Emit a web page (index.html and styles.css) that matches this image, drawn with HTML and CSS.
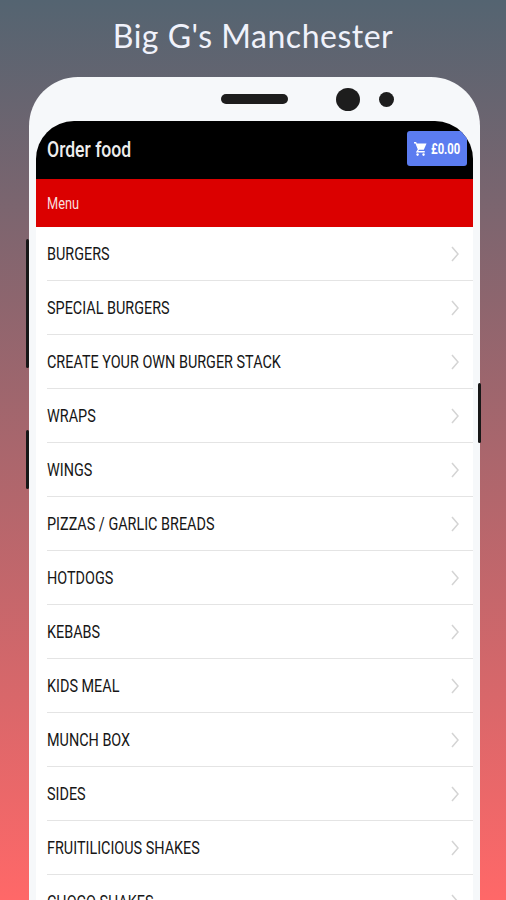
FILE: index.html
```html
<!DOCTYPE html>
<html lang="en">
<head>
<meta charset="utf-8">
<title>Big G's Manchester</title>
<link rel="stylesheet" href="styles.css">
</head>
<body>
<h1><span>Big G's Manchester</span></h1>

<div class="phone">
    <span class="side-button volume"></span>
    <span class="side-button assistant"></span>
    <span class="side-button power"></span>

    <div class="sensors">
        <span class="speaker"></span>
        <span class="camera"></span>
        <span class="sensor"></span>
    </div>

    <div class="screen">
        <header>
            <h2>Order food</h2>
            <button class="cart">
                <svg width="13" height="14" viewBox="1 2 21 20" preserveAspectRatio="none">
                    <path fill="#fff" d="M5 4h17l-4.500 9H8.500z"/>
                    <path fill="none" stroke="#fff" stroke-width="2" d="M1 3h3l4.500 9.500L6 16h13"/>
                    <circle fill="#fff" cx="7" cy="20" r="2"/>
                    <circle fill="#fff" cx="17" cy="20" r="2"/>
                </svg>
                <span>£0.00</span>
            </button>
        </header>
        <div class="section"><span>Menu</span></div>
        <ul class="menu">
            <li><span>BURGERS</span><svg class="arrow" viewBox="0 0 8 16"><path d="M1 1l6 7-6 7"/></svg></li>
            <li><span>SPECIAL BURGERS</span><svg class="arrow" viewBox="0 0 8 16"><path d="M1 1l6 7-6 7"/></svg></li>
            <li><span>CREATE YOUR OWN BURGER STACK</span><svg class="arrow" viewBox="0 0 8 16"><path d="M1 1l6 7-6 7"/></svg></li>
            <li><span>WRAPS</span><svg class="arrow" viewBox="0 0 8 16"><path d="M1 1l6 7-6 7"/></svg></li>
            <li><span>WINGS</span><svg class="arrow" viewBox="0 0 8 16"><path d="M1 1l6 7-6 7"/></svg></li>
            <li><span>PIZZAS / GARLIC BREADS</span><svg class="arrow" viewBox="0 0 8 16"><path d="M1 1l6 7-6 7"/></svg></li>
            <li><span>HOTDOGS</span><svg class="arrow" viewBox="0 0 8 16"><path d="M1 1l6 7-6 7"/></svg></li>
            <li><span>KEBABS</span><svg class="arrow" viewBox="0 0 8 16"><path d="M1 1l6 7-6 7"/></svg></li>
            <li><span>KIDS MEAL</span><svg class="arrow" viewBox="0 0 8 16"><path d="M1 1l6 7-6 7"/></svg></li>
            <li><span>MUNCH BOX</span><svg class="arrow" viewBox="0 0 8 16"><path d="M1 1l6 7-6 7"/></svg></li>
            <li><span>SIDES</span><svg class="arrow" viewBox="0 0 8 16"><path d="M1 1l6 7-6 7"/></svg></li>
            <li><span>FRUITILICIOUS SHAKES</span><svg class="arrow" viewBox="0 0 8 16"><path d="M1 1l6 7-6 7"/></svg></li>
            <li><span>CHOCO SHAKES</span><svg class="arrow" viewBox="0 0 8 16"><path d="M1 1l6 7-6 7"/></svg></li>
        </ul>
    </div>
</div>
</body>
</html>
```
FILE: styles.css
```css
* {
    box-sizing: border-box;
}

body {
    margin: 0;
    height: 900px;
    overflow: hidden;
    background: linear-gradient(#546471, #ff6868);
    font-family: Roboto, "Liberation Sans", sans-serif;
}

h1 {
    margin: 0;
    height: 77px;
    padding-top: 16px;
    text-align: center;
    color: #f0f2fb;
    font: 400 32px/40px Lato, sans-serif;
    letter-spacing: .5px;
}

.phone {
    position: relative;
    width: 451px;
    height: 860px;
    margin-left: 29px;
    padding: 0 7px;
    background: #f6f8fa;
    border-radius: 49px 49px 0 0;
}

.side-button {
    position: absolute;
    width: 3px;
    background: #171717;
    border-radius: 2px;
}

.volume {
    left: -3px;
    top: 162px;
    height: 129px;
}

.assistant {
    left: -3px;
    top: 353px;
    height: 59px;
}

.power {
    right: -1px;
    top: 306px;
    height: 60px;
}

.sensors {
    display: flex;
    align-items: center;
    height: 44px;
    padding-left: 185px;
}

.sensors span {
    background: #1d1d1d;
}

.speaker {
    width: 67px;
    height: 10px;
    border-radius: 5px;
}

.camera {
    width: 24px;
    height: 23px;
    margin-left: 48px;
    border-radius: 50%;
}

.sensor {
    width: 15px;
    height: 15px;
    margin-left: 19px;
    border-radius: 50%;
}

.screen {
    width: 437px;
    overflow: hidden;
    background: #fff;
    border-radius: 38px 38px 0 0;
}

header {
    display: flex;
    justify-content: space-between;
    height: 58px;
    padding: 10px 6px 0 11px;
    background: #000;
}

/* narrow lettering */
h2, .cart span, .section span, .menu span {
    display: inline-block;
    transform: scaleX(.8);
    transform-origin: left center;
    white-space: nowrap;
}

h2 {
    margin: 0;
    color: #eee;
    font-size: 22px;
    font-weight: 500;
    line-height: 37px;
}

.cart {
    display: flex;
    align-items: center;
    width: 60px;
    height: 35px;
    padding: 0 0 0 7px;
    border: 0;
    border-radius: 3px;
    background: #5b7cf0;
    color: #fff;
    font: 700 14px Roboto, sans-serif;
}

.cart span {
    margin-left: 4px;
}

.section {
    height: 48px;
    padding-left: 11px;
    background: #db0000;
    color: #f8dede;
    font-size: 16px;
    line-height: 49px;
}

.menu {
    margin: 0;
    padding: 0 0 0 11px;
    list-style: none;
}

.menu li {
    display: flex;
    align-items: center;
    justify-content: space-between;
    height: 54px;
    padding: 1px 14px 0 0;
    border-bottom: 1px solid #e4e4e4;
    color: #161616;
    font-size: 18px;
}

.menu span {
    margin-bottom: 2px;
}

.arrow {
    width: 8px;
    height: 16px;
    fill: none;
    stroke: #d4d4d4;
    stroke-width: 1.5;
}
```
